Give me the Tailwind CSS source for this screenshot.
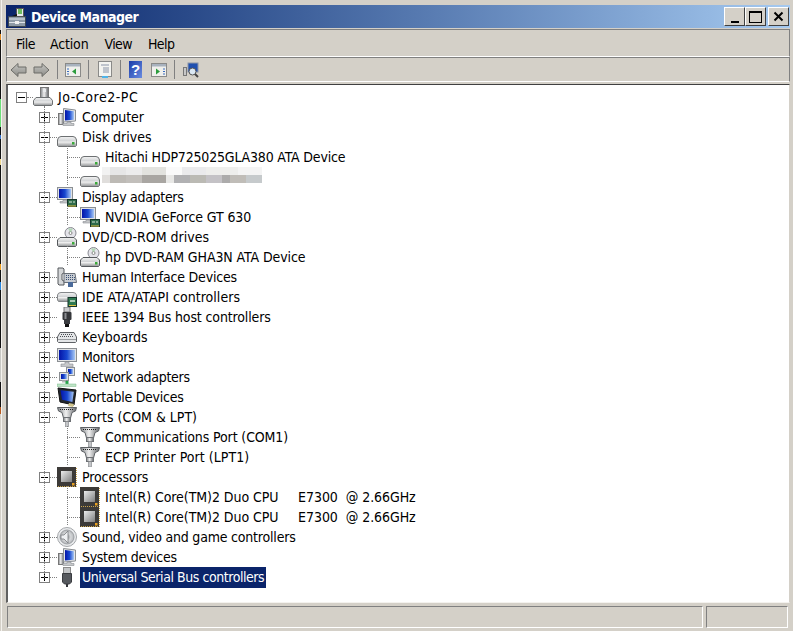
<!DOCTYPE html>
<html lang="en">
<head>
<meta charset="UTF-8">
<title>Device Manager</title>
<script src="https://cdn.jsdelivr.net/npm/@tailwindcss/browser@4"></script>
</head>
<body class="flex h-[631px] w-[793px] overflow-hidden bg-[#d4d0c8] font-['DejaVu_Sans_Condensed','DejaVu_Sans',sans-serif] text-[14px] text-black">
<svg class="absolute h-0 w-0" width="0" height="0">
<defs>
<linearGradient id="g-disk" x1="0" y1="0" x2="0" y2="1"><stop offset="0" stop-color="#f4f4f4"/><stop offset=".45" stop-color="#d2d4d6"/><stop offset=".55" stop-color="#f0f0f0"/><stop offset="1" stop-color="#8d9092"/></linearGradient>
<linearGradient id="g-screen" x1="0" y1="0" x2="1" y2="0"><stop offset="0" stop-color="#0414a8"/><stop offset=".5" stop-color="#1848d0"/><stop offset="1" stop-color="#a8c8f4"/></linearGradient>
<linearGradient id="g-metal" x1="0" y1="0" x2="1" y2="0"><stop offset="0" stop-color="#7f8286"/><stop offset=".45" stop-color="#f0f0f0"/><stop offset="1" stop-color="#63666a"/></linearGradient>
<linearGradient id="g-chip" x1="0" y1="0" x2="1" y2="1"><stop offset="0" stop-color="#ececec"/><stop offset="1" stop-color="#7d7d7d"/></linearGradient>
<linearGradient id="g-arrow" x1="0" y1="0" x2="0" y2="1"><stop offset="0" stop-color="#c8c8c4"/><stop offset="1" stop-color="#8a8a86"/></linearGradient>
<linearGradient id="g-help" x1="0" y1="0" x2="1" y2="1"><stop offset="0" stop-color="#1a3ca8"/><stop offset="1" stop-color="#6a8ce0"/></linearGradient>
<radialGradient id="g-cone"><stop offset="0" stop-color="#8d9094"/><stop offset=".55" stop-color="#d6d8da"/><stop offset="1" stop-color="#b4b7ba"/></radialGradient>
<symbol id="i-disk" viewBox="0 0 20 20"><path d="M.5 13 Q1 9.5 4 9.5 H16 Q19 9.5 19.5 13 V18.5 L18.5 19.5 H1.5 L.5 18.5 Z" fill="url(#g-disk)" stroke="#6d7072"/><rect x="15" y="15" width="2.5" height="2.5" fill="#3aa83a"/></symbol>
<symbol id="i-monitor" viewBox="0 0 20 20"><rect x=".5" y="1.5" width="19" height="13" fill="#e0e2e4" stroke="#8b8f93"/><rect x="2" y="3" width="16" height="10" fill="url(#g-screen)"/><path d="M8 15 h4 v2 h4 v3 H4 v-3 h4z" fill="#c6c8ca" stroke="#8b8f93" stroke-width=".6"/></symbol>
<symbol id="i-card" viewBox="0 0 20 20"><rect x=".5" y=".5" width="15" height="12" fill="#e0e2e4" stroke="#8b8f93"/><rect x="2" y="2" width="12" height="9" fill="url(#g-screen)"/><path d="M6 13 h4 v1.5 h3 v1.5 H3 v-1.5 h3z" fill="#c6c8ca" stroke="#8b8f93" stroke-width=".6"/><rect x="10.5" y="12.5" width="9" height="7" fill="#2f6b4a" stroke="#14352a"/><path d="M12 15 h3 M16 15 h2" stroke="#d8e8d8"/><path d="M11 19 h8" stroke="#e0c040"/></symbol>
<symbol id="i-computer" viewBox="0 0 20 20"><rect x="1.5" y="6.5" width="5" height="11" fill="url(#g-metal)" stroke="#777"/><path d="M6.5 1.5 L18.5 3 V14 L6.5 15Z" fill="#e4e6e8" stroke="#8b8f93"/><path d="M8 3 L17 4.2 V12.8 L8 13.6Z" fill="url(#g-screen)"/><path d="M10 15 h4 v1.5 h3 v2 H6 v-2 h4z" fill="#c6c8ca" stroke="#8b8f93" stroke-width=".6"/></symbol>
<symbol id="i-dvd" viewBox="0 0 20 20"><circle cx="13.5" cy="6" r="5.5" fill="#e4e4ea" stroke="#8a8a92"/><circle cx="13.5" cy="6" r="1.5" fill="#fff" stroke="#888"/><path d="M11 1.5 l2.5 4 l2.5 -4" fill="#9cd0a0" opacity=".7"/><path d="M.5 13 L3 10.5 H17 L19.5 13 V18.5 L18.5 19.5 H1.5 L.5 18.5 Z" fill="url(#g-disk)" stroke="#55585c"/><rect x="15" y="15" width="2.5" height="2.5" fill="#3aa83a"/></symbol>
<symbol id="i-hid" viewBox="0 0 20 20"><path d="M1 1 h5 l1 1 v4 l-2 1 v6 l2 1 v4 h-5 l-1 -1 v-15z" fill="#d4d6d8" stroke="#55585c"/><path d="M7 6.5 h11 l1.5 9 h-12.5z" fill="#c8cdd3" stroke="#6a7078"/><path d="M9 8.5 h8 M9 10.5 h9 M9 12.5 h9" stroke="#3b4f72" stroke-dasharray="1 1"/><path d="M11 15 h5 v5 h-5z" fill="#4a6a9a"/></symbol>
<symbol id="i-ide" viewBox="0 0 20 20"><path d="M.5 8 Q1 5.5 4 5.5 H16 Q19 5.5 19.5 8 V13 L18.5 14.5 H1.5 L.5 13 Z" fill="url(#g-disk)" stroke="#85888b"/><rect x="11" y="10.5" width="8.5" height="9" fill="#2f7a52" stroke="#14352a"/><path d="M13 14 h5" stroke="#d8e8d8" stroke-width="1.5"/><path d="M12 18.5 h7" stroke="#e0c040"/></symbol>
<symbol id="i-firewire" viewBox="0 0 20 20"><rect x="7" y="0" width="6" height="5" fill="#c9cbce" stroke="#777"/><rect x="5.5" y="5" width="9" height="8" rx="1" fill="#35373a"/><rect x="7.5" y="6" width="2" height="6" fill="#8a8c90"/><rect x="7" y="13" width="6" height="4" fill="#3a3c40"/><rect x="8" y="17" width="4" height="3" fill="#111"/></symbol>
<symbol id="i-keyboard" viewBox="0 0 20 20"><path d="M3 5.5 H17 L19.5 10 V14.5 L18.5 15.5 H1.5 L.5 14.5 V10Z" fill="#e4e6e8" stroke="#5f6266"/><path d="M4 7.5 H16 M3 9.5 H17" stroke="#4a4d52" stroke-dasharray="1 1"/><path d="M1 12.5 H19" stroke="#9a9da0"/></symbol>
<symbol id="i-network" viewBox="0 0 20 20"><rect x="9.5" y=".5" width="8" height="8" fill="#dfe2e6" stroke="#8b8f93"/><rect x="11" y="2" width="5" height="5" fill="url(#g-screen)"/><rect x="2.5" y="5.5" width="9" height="8" fill="#dfe2e6" stroke="#8b8f93"/><rect x="4" y="7" width="6" height="5" fill="url(#g-screen)"/><rect x="5" y="13.5" width="4" height="2" fill="#bbb"/><path d="M10 14 v3" stroke="#27a54a" stroke-width="3"/><path d="M0 17 H19 V19.5 H0Z" fill="#bfe4c6" stroke="#7ab888" stroke-width=".5"/></symbol>
<symbol id="i-portable" viewBox="0 0 20 20"><path d="M1 1 L19 3 L17 18 L3 15Z" fill="#23272e" stroke="#111"/><path d="M3.5 3.3 L16.8 4.8 L15.4 15 L5 12.8Z" fill="url(#g-screen)"/><path d="M12 16 L17 17 L16 20 L11 19Z" fill="#d0c48c"/></symbol>
<symbol id="i-port" viewBox="0 0 20 20"><path d="M.5 .5 H19.5 L18.5 4 L15 5.5 L13.5 11 H6.5 L5 5.5 L1.5 4Z" fill="url(#g-metal)" stroke="#5d6064"/><path d="M3 2.5 H17" stroke="#222" stroke-dasharray="1 1"/><rect x="6.5" y="10.5" width="7" height="4" fill="url(#g-metal)" stroke="#6d7074"/><rect x="8.5" y="14.5" width="3" height="5.5" fill="#c4c6c9" stroke="#7d8084" stroke-width=".6"/></symbol>
<symbol id="i-cpu" viewBox="0 0 20 20"><rect x="0" y="0" width="19" height="20" fill="#3c3a38"/><rect x="4" y="4" width="11" height="11" fill="url(#g-chip)"/><path d="M19.5 1v18.5H1" fill="none" stroke="#c9a24a" stroke-dasharray="1 1"/><rect x="15" y="16" width="2.5" height="2.5" fill="#e8a020"/></symbol>
<symbol id="i-sound" viewBox="0 0 20 20"><circle cx="10" cy="10" r="9.5" fill="#e8eaec" stroke="#a4a7aa"/><circle cx="10" cy="10" r="7" fill="url(#g-cone)" stroke="#9da0a4"/><path d="M4 8 h3 l4 -4 v12 l-4 -4 h-3z" fill="#eef0f2" stroke="#777a7e" stroke-width=".8"/></symbol>
<symbol id="i-usb" viewBox="0 0 20 20"><rect x="6.5" y=".5" width="7" height="6" fill="#c4c6c8" stroke="#8a8a8a"/><path d="M5.5 6.5 H14.5 V15 L12.5 17 H7.5 L5.5 15Z" fill="#56595e" stroke="#3a3c40"/><rect x="9" y="17" width="2" height="3" fill="#33353a"/></symbol>
<symbol id="i-root" viewBox="0 0 20 20"><rect x="7.5" y=".5" width="8" height="12" fill="url(#g-metal)" stroke="#777"/><rect x="10" y="2" width="3" height="3" fill="#e8eaec"/><path d="M.5 13.5 L3 10.5 H17 L19.5 13.5 V17.5 L18.5 18.5 H1.5 L.5 17.5 Z" fill="url(#g-disk)" stroke="#6d7072"/></symbol>
<symbol id="i-plus" viewBox="0 0 11 11"><rect x=".5" y=".5" width="10" height="10" fill="#fff" stroke="#808080"/><path d="M2 5.5H9M5.5 2V9" stroke="#000"/></symbol>
<symbol id="i-minus" viewBox="0 0 11 11"><rect x=".5" y=".5" width="10" height="10" fill="#fff" stroke="#808080"/><path d="M2 5.5H9" stroke="#000"/></symbol>
</defs>
</svg>

<!-- desktop showing behind the window on the left edge -->
<div class="mt-[30px] flex h-[384px] w-[1px] shrink-0 flex-col bg-[#111]">
  <span class="mt-[4px] h-[6px] bg-[#e08a20]"></span>
  <span class="mt-[59px] h-[28px] bg-[#6ee07a]"></span>
  <span class="mt-[8px] h-[4px] bg-[#3a78d0]"></span>
  <span class="mt-[20px] h-[6px] bg-[#f0d890]"></span>
  <span class="mt-[99px] h-[6px] bg-[#f0a020]"></span>
  <span class="mt-[12px] h-[8px] bg-[#2a88e0]"></span>
  <span class="mt-[58px] h-[34px] bg-[#c8c8c4]"></span>
  <span class="mt-[25px] h-[7px] bg-[#b85a20]"></span>
</div>

<div class="flex h-full flex-1 flex-col border-l border-[#f4f2ee] pl-[4px] pr-[3px] pt-[5px]">
  <!-- title bar -->
  <div class="flex h-[23px] shrink-0 items-center bg-gradient-to-r from-[#0a246a] to-[#a6caf0] pl-[1px] pr-[1px]">
    <svg class="h-[20px] w-[20px]" viewBox="0 0 20 20"><path d="M1.5 9.5 H18.5 V19.5 H1.5Z" fill="#8e9aa6" stroke="#3c4650"/><path d="M2 12 H18 M2 15.5 H18" stroke="#dfe4ea"/><rect x="8" y="14" width="4" height="3" fill="#f0f0f0"/><rect x="9.5" y="1.5" width="7" height="8" fill="#e8eaec" stroke="#555"/><rect x="11" y="2" width="4" height="5" fill="#6fbe5f"/><path d="M5 9 L10 7 V9Z" fill="#111"/></svg>
    <span class="ml-[4px] flex-1 translate-y-[1px] text-[14px] font-bold tracking-[-0.5px] text-white">Device Manager</span>
    <div class="flex items-start">
      <button class="flex h-[19px] w-[21px] items-end justify-center border border-t-white border-l-white border-r-[#404040] border-b-[#404040] bg-[#d4d0c8] pb-[2px]"><span class="h-[2px] w-[8px] bg-black"></span></button>
      <button class="flex h-[19px] w-[21px] items-center justify-center border border-t-white border-l-white border-r-[#404040] border-b-[#404040] bg-[#d4d0c8]"><span class="h-[12px] w-[13px] border border-t-2 border-black"></span></button>
      <button class="ml-[2px] flex h-[19px] w-[21px] items-center justify-center border border-t-white border-l-white border-r-[#404040] border-b-[#404040] bg-[#d4d0c8]"><svg class="h-[11px] w-[11px]" viewBox="0 0 11 11"><path d="M1.5 1.5L9.5 9.5M9.5 1.5L1.5 9.5" stroke="#000" stroke-width="2"/></svg></button>
    </div>
  </div>

  <!-- menu bar -->
  <div class="mt-[1px] flex h-[28px] shrink-0 items-center gap-[15px] border border-t-[#808080] border-l-[#808080] border-r-[#808080] border-b-white pl-[9px]">
    <span class="translate-y-[1px] tracking-[-0.5px]">File</span><span class="translate-y-[1px] tracking-[-0.15px]">Action</span><span class="ml-[1px] translate-y-[1px] tracking-[-0.6px]">View</span><span class="ml-[1px] translate-y-[1px] tracking-[-0.6px]">Help</span>
  </div>

  <!-- toolbar -->
  <div class="flex h-[25px] shrink-0 items-center border border-t-[#808080] border-l-[#808080] border-r-[#808080] border-b-white pl-[3px]">
    <svg class="h-[16px] w-[17px]" viewBox="0 0 17 16"><path d="M1 8 L8 1.5 V5 H16 V11 H8 V14.5Z" fill="url(#g-arrow)" stroke="#6c6c68"/></svg>
    <svg class="ml-[6px] h-[16px] w-[17px]" viewBox="0 0 17 16"><path d="M16 8 L9 1.5 V5 H1 V11 H9 V14.5Z" fill="url(#g-arrow)" stroke="#6c6c68"/></svg>
    <span class="ml-[7px] h-[19px] w-[1px] bg-[#808080]"></span>
    <svg class="ml-[7px] h-[16px] w-[16px]" viewBox="0 0 16 16"><rect x=".5" y="1.5" width="15" height="13" fill="#f0f0ec" stroke="#8a8a88"/><rect x="1" y="2" width="14" height="2.5" fill="#a8b2be"/><path d="M11 6.5V12.5L7 9.5Z" fill="#2c9c3c"/><path d="M2 7h2M2 9.5h2M2 12h2" stroke="#3a6cc0"/></svg>
    <span class="ml-[7px] h-[19px] w-[1px] bg-[#808080]"></span>
    <svg class="ml-[8px] h-[17px] w-[16px]" viewBox="0 0 16 17"><rect x="1.5" y=".5" width="13" height="15" fill="#f4f4f0" stroke="#8a8a88"/><path d="M4 4H12M6 7H12M6 9H12M6 11H12" stroke="#8a94a8"/><rect x="5" y="15" width="6" height="2" fill="#4fb4e8"/></svg>
    <span class="ml-[7px] h-[19px] w-[1px] bg-[#808080]"></span>
    <svg class="ml-[8px] h-[17px] w-[13px]" viewBox="0 0 13 17"><rect width="13" height="17" fill="url(#g-help)"/><text x="6.5" y="14" text-anchor="middle" font-size="15" font-weight="700" fill="#fff" font-family="Liberation Sans">?</text></svg>
    <svg class="ml-[9px] h-[16px] w-[16px]" viewBox="0 0 16 16"><rect x=".5" y="1.5" width="15" height="13" fill="#f0f0ec" stroke="#8a8a88"/><rect x="1" y="2" width="14" height="2.5" fill="#a8b2be"/><path d="M5 6.5V12.5L9 9.5Z" fill="#2c9c3c"/><path d="M12 7h2M12 9.5h2M12 12h2" stroke="#3a6cc0"/></svg>
    <span class="ml-[7px] h-[19px] w-[1px] bg-[#808080]"></span>
    <svg class="ml-[8px] h-[16px] w-[16px]" viewBox="0 0 16 16"><rect x=".5" y="5.5" width="3" height="8" fill="#c8c8c8" stroke="#777"/><rect x="5" y="1" width="10" height="9" fill="#2050b0" stroke="#8a94a8"/><circle cx="9.5" cy="9.5" r="3.5" fill="#dbe8f4" stroke="#555"/><path d="M12 12L15 15" stroke="#444" stroke-width="2"/></svg>
  </div>

  <!-- tree -->
  <div class="relative mt-[2px] h-[519px] shrink-0 border border-l-2 border-t-[#404040] border-l-[#606060] border-r-[#d4d0c8] border-b-[#f4f2ee] bg-white pt-[2px]">
    <!-- dotted trunk lines -->
    <span class="absolute left-[36px] top-[21px] h-[472px] border-l border-dotted border-[#808080]"></span>
    <span class="absolute left-[59px] top-[61px] h-[39px] border-l border-dotted border-[#808080]"></span>
    <span class="absolute left-[59px] top-[121px] h-[19px] border-l border-dotted border-[#808080]"></span>
    <span class="absolute left-[59px] top-[161px] h-[19px] border-l border-dotted border-[#808080]"></span>
    <span class="absolute left-[59px] top-[341px] h-[39px] border-l border-dotted border-[#808080]"></span>
    <span class="absolute left-[59px] top-[401px] h-[39px] border-l border-dotted border-[#808080]"></span>

    <div class="flex h-5 items-center pl-[8px]"><svg class="h-[11px] w-[11px]"><use href="#i-minus"/></svg><span class="w-[6px] border-t border-dotted border-[#808080]"></span><svg class="h-[20px] w-[20px]"><use href="#i-root"/></svg><span class="ml-[5px] tracking-[0.55px]">Jo-Core2-PC</span></div>
    <div class="flex h-5 items-center pl-[31px]"><svg class="h-[11px] w-[11px]"><use href="#i-plus"/></svg><span class="w-[7px] border-t border-dotted border-[#808080]"></span><svg class="h-[20px] w-[20px]"><use href="#i-computer"/></svg><span class="ml-[5px] tracking-[-0.1px]">Computer</span></div>
    <div class="flex h-5 items-center pl-[31px]"><svg class="h-[11px] w-[11px]"><use href="#i-minus"/></svg><span class="w-[7px] border-t border-dotted border-[#808080]"></span><svg class="h-[20px] w-[20px]"><use href="#i-disk"/></svg><span class="ml-[5px]">Disk drives</span></div>
    <div class="flex h-5 items-center pl-[59px]"><span class="w-[13px] border-t border-dotted border-[#808080]"></span><svg class="h-[20px] w-[20px]"><use href="#i-disk"/></svg><span class="ml-[5px] tracking-[-0.18px]">Hitachi HDP725025GLA380 ATA Device</span></div>
    <div class="flex h-5 items-center pl-[59px]"><span class="w-[13px] border-t border-dotted border-[#808080]"></span><svg class="h-[20px] w-[20px]"><use href="#i-disk"/></svg>
      <svg class="ml-[2px] h-[16px] w-[160px] -translate-y-[2px]" viewBox="0 0 160 16"><path d="M0 0h8v8H0z" fill="#f2f2f2"/><path d="M8 0h16v8H8z" fill="#e6e6e6"/><path d="M24 0h16v8H24z" fill="#ececec"/><path d="M40 0h24v8H40z" fill="#e2e2de"/><path d="M64 0h16v8H64z" fill="#fafafa"/><path d="M80 0h24v8H80z" fill="#eaeaec"/><path d="M104 0h32v8h-32z" fill="#eeeeec"/><path d="M136 0h24v8h-24z" fill="#f4f4f4"/><path d="M0 8h8v8H0z" fill="#e0dedc"/><path d="M8 8h16v8H8z" fill="#bdbab5"/><path d="M24 8h16v8H24z" fill="#c2bfbb"/><path d="M40 8h24v8H40z" fill="#a9a6a2"/><path d="M64 8h8v8h-8z" fill="#e8e8e6"/><path d="M72 8h16v8H72z" fill="#b1b1b3"/><path d="M88 8h16v8H88z" fill="#bbbab4"/><path d="M104 8h16v8h-16z" fill="#c4c2c6"/><path d="M120 8h8v8h-8z" fill="#acabab"/><path d="M128 8h16v8h-16z" fill="#c0bdb8"/><path d="M144 8h16v8h-16z" fill="#c6cacc"/></svg></div>
    <div class="flex h-5 items-center pl-[31px]"><svg class="h-[11px] w-[11px]"><use href="#i-minus"/></svg><span class="w-[7px] border-t border-dotted border-[#808080]"></span><svg class="h-[20px] w-[20px]"><use href="#i-card"/></svg><span class="ml-[5px] tracking-[-0.3px]">Display adapters</span></div>
    <div class="flex h-5 items-center pl-[59px]"><span class="w-[13px] border-t border-dotted border-[#808080]"></span><svg class="h-[20px] w-[20px]"><use href="#i-card"/></svg><span class="ml-[5px] tracking-[-0.1px]">NVIDIA GeForce GT 630</span></div>
    <div class="flex h-5 items-center pl-[31px]"><svg class="h-[11px] w-[11px]"><use href="#i-minus"/></svg><span class="w-[7px] border-t border-dotted border-[#808080]"></span><svg class="h-[20px] w-[20px]"><use href="#i-dvd"/></svg><span class="ml-[5px]">DVD/CD-ROM drives</span></div>
    <div class="flex h-5 items-center pl-[59px]"><span class="w-[13px] border-t border-dotted border-[#808080]"></span><svg class="h-[20px] w-[20px]"><use href="#i-dvd"/></svg><span class="ml-[5px] tracking-[-0.1px]">hp DVD-RAM GHA3N ATA Device</span></div>
    <div class="flex h-5 items-center pl-[31px]"><svg class="h-[11px] w-[11px]"><use href="#i-plus"/></svg><span class="w-[7px] border-t border-dotted border-[#808080]"></span><svg class="h-[20px] w-[20px]"><use href="#i-hid"/></svg><span class="ml-[5px] tracking-[-0.2px]">Human Interface Devices</span></div>
    <div class="flex h-5 items-center pl-[31px]"><svg class="h-[11px] w-[11px]"><use href="#i-plus"/></svg><span class="w-[7px] border-t border-dotted border-[#808080]"></span><svg class="h-[20px] w-[20px]"><use href="#i-ide"/></svg><span class="ml-[5px] tracking-[0.04px]">IDE ATA/ATAPI controllers</span></div>
    <div class="flex h-5 items-center pl-[31px]"><svg class="h-[11px] w-[11px]"><use href="#i-plus"/></svg><span class="w-[7px] border-t border-dotted border-[#808080]"></span><svg class="h-[20px] w-[20px]"><use href="#i-firewire"/></svg><span class="ml-[5px] tracking-[-0.13px]">IEEE 1394 Bus host controllers</span></div>
    <div class="flex h-5 items-center pl-[31px]"><svg class="h-[11px] w-[11px]"><use href="#i-plus"/></svg><span class="w-[7px] border-t border-dotted border-[#808080]"></span><svg class="h-[20px] w-[20px]"><use href="#i-keyboard"/></svg><span class="ml-[5px]">Keyboards</span></div>
    <div class="flex h-5 items-center pl-[31px]"><svg class="h-[11px] w-[11px]"><use href="#i-plus"/></svg><span class="w-[7px] border-t border-dotted border-[#808080]"></span><svg class="h-[20px] w-[20px]"><use href="#i-monitor"/></svg><span class="ml-[5px] tracking-[-0.25px]">Monitors</span></div>
    <div class="flex h-5 items-center pl-[31px]"><svg class="h-[11px] w-[11px]"><use href="#i-plus"/></svg><span class="w-[7px] border-t border-dotted border-[#808080]"></span><svg class="h-[20px] w-[20px]"><use href="#i-network"/></svg><span class="ml-[5px] tracking-[-0.3px]">Network adapters</span></div>
    <div class="flex h-5 items-center pl-[31px]"><svg class="h-[11px] w-[11px]"><use href="#i-plus"/></svg><span class="w-[7px] border-t border-dotted border-[#808080]"></span><svg class="h-[20px] w-[20px]"><use href="#i-portable"/></svg><span class="ml-[5px] tracking-[-0.25px]">Portable Devices</span></div>
    <div class="flex h-5 items-center pl-[31px]"><svg class="h-[11px] w-[11px]"><use href="#i-minus"/></svg><span class="w-[7px] border-t border-dotted border-[#808080]"></span><svg class="h-[20px] w-[20px]"><use href="#i-port"/></svg><span class="ml-[5px]">Ports (COM &amp; LPT)</span></div>
    <div class="flex h-5 items-center pl-[59px]"><span class="w-[13px] border-t border-dotted border-[#808080]"></span><svg class="h-[20px] w-[20px]"><use href="#i-port"/></svg><span class="ml-[5px] tracking-[-0.12px]">Communications Port (COM1)</span></div>
    <div class="flex h-5 items-center pl-[59px]"><span class="w-[13px] border-t border-dotted border-[#808080]"></span><svg class="h-[20px] w-[20px]"><use href="#i-port"/></svg><span class="ml-[5px] tracking-[0.04px]">ECP Printer Port (LPT1)</span></div>
    <div class="flex h-5 items-center pl-[31px]"><svg class="h-[11px] w-[11px]"><use href="#i-minus"/></svg><span class="w-[7px] border-t border-dotted border-[#808080]"></span><svg class="h-[20px] w-[20px]"><use href="#i-cpu"/></svg><span class="ml-[5px] tracking-[-0.1px]">Processors</span></div>
    <div class="flex h-5 items-center pl-[59px]"><span class="w-[13px] border-t border-dotted border-[#808080]"></span><svg class="h-[20px] w-[20px]"><use href="#i-cpu"/></svg><span class="ml-[5px] whitespace-pre tracking-[-0.06px]">Intel(R) Core(TM)2 Duo CPU     E7300  @ 2.66GHz</span></div>
    <div class="flex h-5 items-center pl-[59px]"><span class="w-[13px] border-t border-dotted border-[#808080]"></span><svg class="h-[20px] w-[20px]"><use href="#i-cpu"/></svg><span class="ml-[5px] whitespace-pre tracking-[-0.06px]">Intel(R) Core(TM)2 Duo CPU     E7300  @ 2.66GHz</span></div>
    <div class="flex h-5 items-center pl-[31px]"><svg class="h-[11px] w-[11px]"><use href="#i-plus"/></svg><span class="w-[7px] border-t border-dotted border-[#808080]"></span><svg class="h-[20px] w-[20px]"><use href="#i-sound"/></svg><span class="ml-[5px] tracking-[-0.2px]">Sound, video and game controllers</span></div>
    <div class="flex h-5 items-center pl-[31px]"><svg class="h-[11px] w-[11px]"><use href="#i-plus"/></svg><span class="w-[7px] border-t border-dotted border-[#808080]"></span><svg class="h-[20px] w-[20px]"><use href="#i-computer"/></svg><span class="ml-[5px] tracking-[-0.3px]">System devices</span></div>
    <div class="flex h-5 items-center pl-[31px]"><svg class="h-[11px] w-[11px]"><use href="#i-plus"/></svg><span class="w-[7px] border-t border-dotted border-[#808080]"></span><svg class="h-[20px] w-[20px]"><use href="#i-usb"/></svg><span class="ml-[3px] bg-[#0a246a] px-[2px] tracking-[-0.44px] text-white">Universal Serial Bus controllers</span></div>
  </div>

  <!-- status bar -->
  <div class="ml-[1px] mr-[2px] mt-[3px] flex h-[22px] shrink-0 gap-[3px]">
    <div class="flex-1 border border-t-[#808080] border-l-[#808080] border-r-white border-b-white"></div>
    <div class="w-[82px] border border-t-[#808080] border-l-[#808080] border-r-white border-b-white"></div>
  </div>
</div>
</body>
</html>
